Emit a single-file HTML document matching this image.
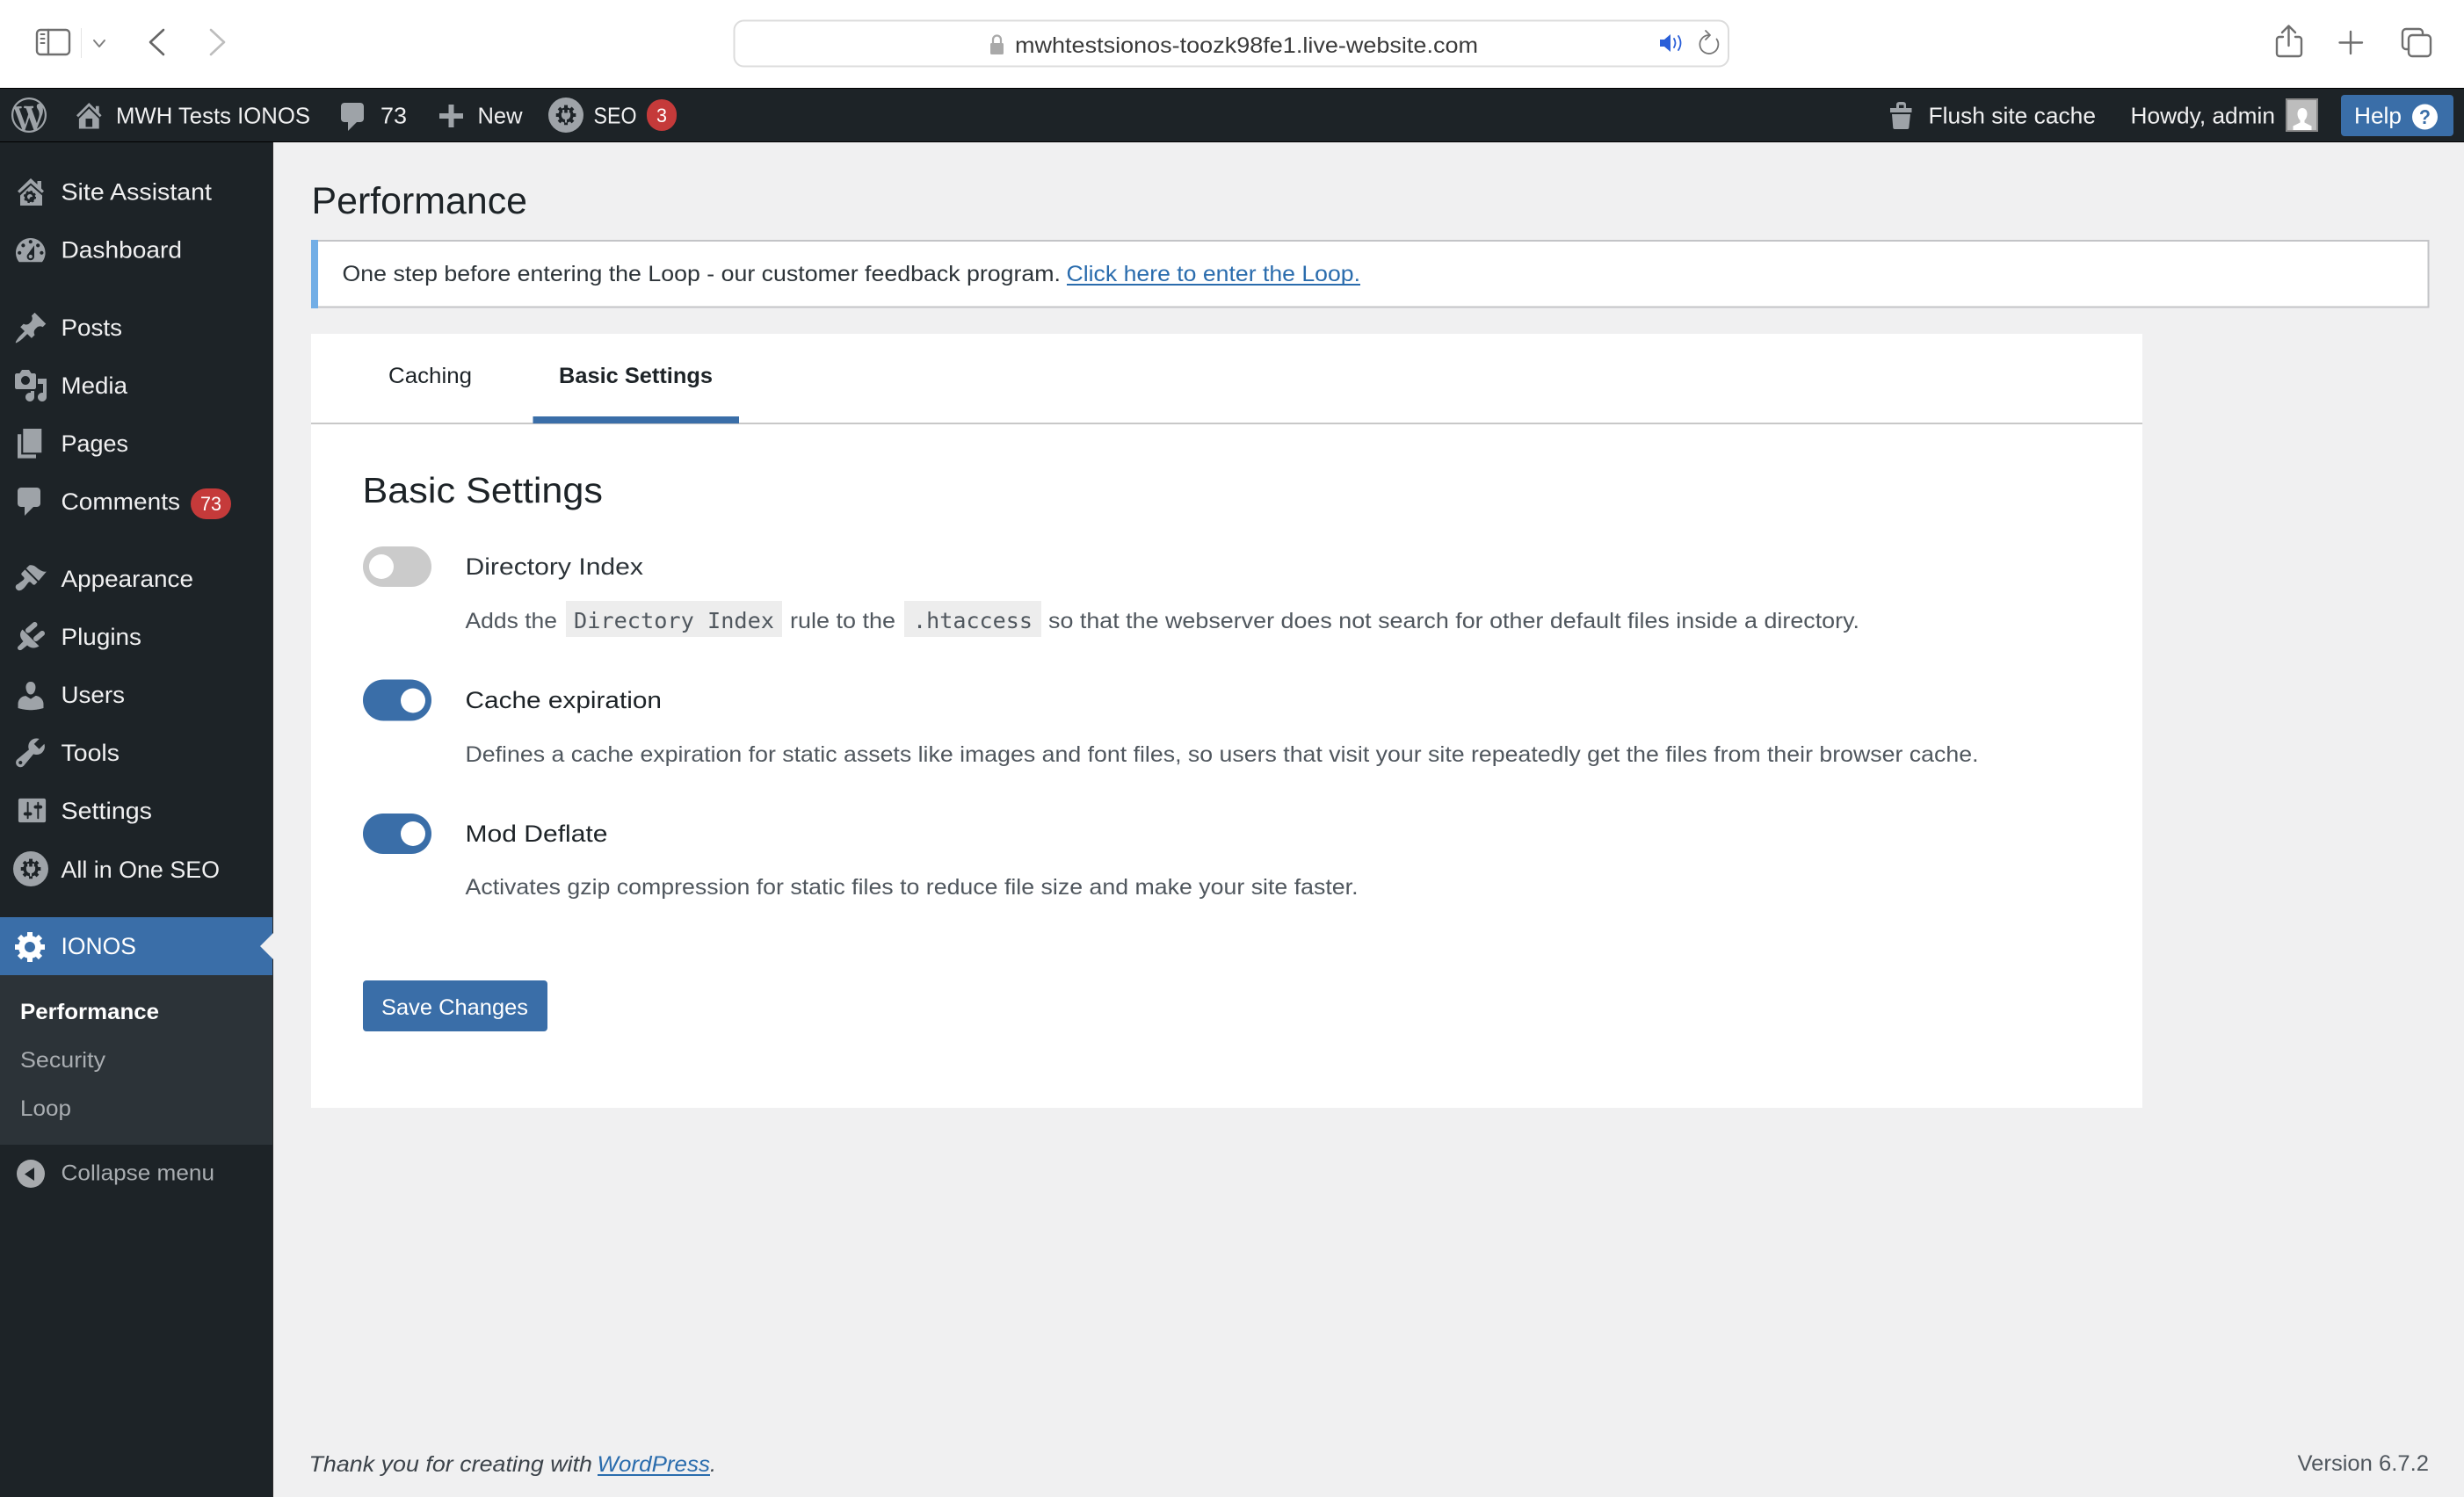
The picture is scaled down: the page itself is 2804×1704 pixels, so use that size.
<!DOCTYPE html>
<html lang="en">
<head>
<meta charset="utf-8">
<title>Performance</title>
<style>
html,body{margin:0;padding:0;width:2804px;height:1704px;overflow:hidden;background:#f0f0f1}
svg{display:block}
text{font-family:"Liberation Sans",Arial,sans-serif;white-space:pre}
.bar{font-size:26px;fill:#f0f0f1}
.menu{font-size:27px;fill:#f0f0f1}
.sub{font-size:25px;fill:#a9adb1}
.desc{font-size:25px;fill:#50575e}
.code{font-size:25px;fill:#50575e;font-family:"DejaVu Sans Mono","Liberation Mono",monospace}
.label{font-size:27px;fill:#1d2327}
.ico{fill:#9ea3a8}
.tb{fill:none;stroke:#6f6f6f;stroke-width:2.4;stroke-linecap:round;stroke-linejoin:round}
</style>
</head>
<body>
<svg xmlns="http://www.w3.org/2000/svg" width="2804" height="1704" viewBox="0 0 2804 1704">
<rect width="2804" height="1704" fill="#f0f0f1"/>

<!-- browser toolbar -->
<rect width="2804" height="100" fill="#fff"/>
<g class="tb">
<rect x="42" y="34" width="37" height="28" rx="4"/>
<path d="M55 34V62"/>
<path d="M46.5 39h4M46.5 44h4M46.5 49h4" stroke-width="2"/>
<path d="M107 46l6 7 6-7" stroke="#808080" stroke-width="2"/>
<path d="M186 34L171 48 186 62" stroke="#666" stroke-width="2.6"/>
<path d="M240 34L255 48 240 62" stroke="#bdbdbd" stroke-width="2.6"/>
</g>
<rect x="92" y="32" width="1" height="34" fill="#e4e4e4"/>

<rect x="835.5" y="23.5" width="1131.5" height="52" rx="11" fill="#fff" stroke="#dcdcdc" stroke-width="2"/>
<rect x="1127" y="49" width="15" height="13" rx="1.5" fill="#a9a9a9"/>
<path d="M1130 49v-4a4.5 4.5 0 0 1 9 0v4" fill="none" stroke="#a9a9a9" stroke-width="2.2"/>
<text x="1155" y="60" font-size="25" fill="#3a3a3a" textLength="527" lengthAdjust="spacingAndGlyphs">mwhtestsionos-toozk98fe1.live-website.com</text>
<path d="M1889 45h5l7-6v20l-7-6h-5z" fill="#2a5fd8"/>
<path d="M1905 44q3 5 0 10M1910 41q5 8 0 16" fill="none" stroke="#2a5fd8" stroke-width="1.8" stroke-linecap="round"/>
<path d="M1953.500 44.500A10.500 10.500 0 1 1 1945 40" fill="none" stroke="#777" stroke-width="1.8" stroke-linecap="round"/>
<path d="M1941 35l5 5-5 5" fill="none" stroke="#777" stroke-width="1.8" stroke-linecap="round" stroke-linejoin="round"/>

<g class="tb">
<path d="M2598 42h-4a3 3 0 0 0-3 3v16a3 3 0 0 0 3 3h22a3 3 0 0 0 3-3V45a3 3 0 0 0-3-3h-4"/>
<path d="M2604.5 52V30M2597 37l7.5-7.5L2612 37"/>
<path d="M2675 36V61M2662.5 48.500h25.500"/>
<rect x="2741" y="40" width="25" height="24" rx="4"/>
<path d="M2741 56h-3a4 4 0 0 1-4-4V37a4 4 0 0 1 4-4h15a4 4 0 0 1 4 4v3"/>
</g>

<!-- admin bar -->
<rect y="100" width="2804" height="62" fill="#1d2327"/>
<rect y="100" width="2804" height="1" fill="#000"/>
<rect y="161" width="2804" height="1" fill="#000"/>

<path class="ico" fill-rule="evenodd" transform="translate(13,111) scale(2)" d="M20 10c0-5.510-4.490-10-10-10C4.480 0 0 4.490 0 10c0 5.520 4.480 10 10 10 5.510 0 10-4.480 10-10zM7.780 15.370L4.370 6.220c.55-.02 1.170-.08 1.170-.08.5-.06.44-1.130-.06-1.110 0 0-1.450.11-2.370.11-.18 0-.37 0-.58-.01C4.120 2.690 6.870 1.110 10 1.110c2.330 0 4.450.87 6.050 2.340-.68-.11-1.650.39-1.650 1.580 0 .74.45 1.360.9 2.100.35.61.55 1.360.55 2.460 0 1.490-1.400 5-1.400 5l-3.030-8.370c.54-.02.82-.17.82-.17.5-.05.44-1.250-.06-1.220 0 0-1.440.12-2.380.12-.87 0-2.330-.12-2.330-.12-.5-.03-.56 1.200-.06 1.220l.92.08 1.260 3.410zM17.410 10c.24-.64.74-1.870.43-4.250.7 1.290 1.050 2.710 1.050 4.250 0 3.290-1.730 6.240-4.400 7.780.97-2.590 1.940-5.200 2.920-7.780zM6.100 18.090C3.120 16.650 1.110 13.530 1.110 10c0-1.300.23-2.480.72-3.590C3.250 10.300 4.670 14.200 6.100 18.090zm4.030-6.630l2.580 6.980c-.86.29-1.760.45-2.710.45-.79 0-1.570-.11-2.290-.33.81-2.380 1.620-4.740 2.420-7.100z"/>

<path class="ico" fill-rule="evenodd" transform="translate(82.3,112.25) scale(1.9)" d="M16 8.500l1.530 1.530-1.060 1.060L10 4.620l-6.470 6.470-1.060-1.060L10 2.500l4 4v-2h2v4zm-6-2.460l6 5.990V18H4v-5.970zM12 17v-5H8v5h4z"/>
<text class="bar" x="132" y="140.500" textLength="221" lengthAdjust="spacingAndGlyphs">MWH Tests IONOS</text>

<path class="ico" transform="translate(382,113) scale(2)" d="M5 2h9c1.100 0 2 .9 2 2v7c0 1.100-.9 2-2 2h-2l-5 5v-5H5c-1.100 0-2-.9-2-2V4c0-1.100.9-2 2-2z"/>
<text class="bar" x="433" y="140.500" textLength="30" lengthAdjust="spacingAndGlyphs">73</text>

<path class="ico" d="M510.5 119h6v10h10.500v6h-10.500v10h-6v-10H500v-6h10.500z"/>
<text class="bar" x="543.5" y="140.500" textLength="51" lengthAdjust="spacingAndGlyphs">New</text>

<g transform="translate(644,131)">
<circle r="20" fill="#9ea3a8"/>
<path fill="#1d2327" fill-rule="evenodd" transform="translate(-12.6,-14) scale(1.33)" d="M18 12h-2.180c-.17.7-.44 1.350-.81 1.930l1.540 1.540-2.100 2.100-1.540-1.540c-.58.36-1.230.63-1.910.79V19H8v-2.180c-.68-.16-1.330-.43-1.910-.79l-1.540 1.540-2.120-2.120 1.540-1.540c-.36-.58-.63-1.230-.79-1.910H1V9.030h2.170c.16-.7.44-1.350.8-1.940L2.430 5.550l2.100-2.100 1.540 1.540c.58-.37 1.240-.64 1.930-.81V2h3v2.180c.68.16 1.330.43 1.910.79l1.540-1.540 2.120 2.120-1.540 1.540c.36.59.64 1.240.8 1.940H18V12z"/>
<path fill="#9ea3a8" transform="scale(.85)" d="M-4.500-7h2.400v4h4.200v-4h2.400v4H6v3.500a5.500 5.500 0 0 1-4.800 5.400V10h-2.400V5.900A5.500 5.500 0 0 1-6 .500V-3h1.500z"/>
</g>
<text class="bar" x="675.5" y="140.500" textLength="49" lengthAdjust="spacingAndGlyphs">SEO</text>
<rect x="736" y="113" width="34" height="36" rx="17" fill="#c53a3a"/>
<text x="747" y="139" font-size="22" fill="#fff" textLength="12" lengthAdjust="spacingAndGlyphs">3</text>

<path class="ico" fill-rule="evenodd" d="M2151 123h7v-3.500q0-3.500 3.500-3.500h4q3.500 0 3.500 3.500V123h6.500v5h-24.500zM2161 123h5.500v-3.500h-5.500zM2153 130h21l-1.700 15.500q-.2 1.500-2 1.500h-14q-1.800 0-2-1.500z"/>
<text class="bar" x="2194.5" y="140.500" textLength="190.500" lengthAdjust="spacingAndGlyphs">Flush site cache</text>
<text class="bar" x="2424.500" y="140.500" textLength="164.500" lengthAdjust="spacingAndGlyphs">Howdy, admin</text>
<rect x="2602" y="113" width="35" height="36" fill="#bdbdbd" stroke="#8a8a8a" stroke-width="2"/>
<path fill="#fff" d="M2620 123c3.500 0 5.500 3 5.500 6.500s-1.500 6-3 7.500v2.500l8 4v4.500h-21v-4.500l8-4V137c-1.500-1.500-3-4-3-7.500s2-6.500 5.500-6.500z"/>

<rect x="2664" y="108" width="128" height="47" rx="4" fill="#3a6ea8"/>
<text class="bar" x="2679" y="140.500" textLength="54" lengthAdjust="spacingAndGlyphs" style="fill:#fff">Help</text>
<circle cx="2759.5" cy="133" r="14.500" fill="#fff"/>
<text x="2753" y="141" font-size="23" font-weight="700" fill="#3a6ea8" textLength="13" lengthAdjust="spacingAndGlyphs">?</text>

<!-- sidebar -->
<rect y="162" width="310" height="1542" fill="#1d2327"/>
<rect x="310" y="162" width="1" height="1542" fill="#2a2a2a"/>

<path class="ico" d="M35 203l7.500 7v-4h4.500v8.500l3 3-2.200 2.300L35 208.500 22.200 219.800 20 217.500z"/>
<path class="ico" fill-rule="evenodd" d="M35 211l13 11.500V234H23v-11.500zM33.500 226.500a2.500 2.500 0 1 0 0-.01z"/>
<circle cx="34" cy="224" r="4.500" fill="none" stroke="#1d2327" stroke-width="3"/>
<circle cx="34" cy="224" r="6.300" fill="none" stroke="#1d2327" stroke-width="1.600" stroke-dasharray="2.500 2.500"/>
<text class="menu" x="69.500" y="227.500" textLength="171.500" lengthAdjust="spacingAndGlyphs">Site Assistant</text>

<path class="ico" fill-rule="evenodd" transform="translate(13.8,264.7) scale(2.1)" d="M3.760 16h12.480c1.100-1.370 1.760-3.110 1.760-5 0-4.420-3.580-8-8-8s-8 3.580-8 8c0 1.890.66 3.630 1.760 5zM10 4c.55 0 1 .45 1 1s-.45 1-1 1-1-.45-1-1 .45-1 1-1zM6 6c.55 0 1 .45 1 1s-.45 1-1 1-1-.45-1-1 .45-1 1-1zm8 0c.55 0 1 .45 1 1s-.45 1-1 1-1-.45-1-1 .45-1 1-1zm-5.370 5.550L12 7v6c0 1.100-.9 2-2 2s-2-.9-2-2c0-.57.24-1.080.63-1.450zM4 10c.55 0 1 .45 1 1s-.45 1-1 1-1-.45-1-1 .45-1 1-1zm12 0c.55 0 1 .45 1 1s-.45 1-1 1-1-.45-1-1 .45-1 1-1zm-5 3c0-.55-.45-1-1-1s-1 .45-1 1 .45 1 1 1 1-.45 1-1z"/>
<text class="menu" x="69.500" y="293.500" textLength="137.500" lengthAdjust="spacingAndGlyphs">Dashboard</text>

<path class="ico" transform="translate(15,353.5) scale(2)" d="M10.440 3.020l1.820-1.820 6.360 6.350-1.830 1.820c-1.050-.68-2.480-.57-3.410.36l-.75.75c-.92.93-1.040 2.350-.35 3.410l-1.830 1.820-2.410-2.410-2.800 2.790c-.42.42-3.380 2.710-3.800 2.290s1.860-3.390 2.280-3.810l2.790-2.790L4.100 9.360l1.830-1.820c1.050.69 2.480.57 3.400-.36l.75-.75c.93-.92 1.050-2.350.36-3.410z"/>
<text class="menu" x="69.500" y="382" textLength="69.500" lengthAdjust="spacingAndGlyphs">Posts</text>

<path class="ico" fill-rule="evenodd" transform="translate(15,419) scale(2)" d="M13 11V4c0-.55-.45-1-1-1h-1.670L9 1H5L3.670 3H2c-.55 0-1 .45-1 1v7c0 .55.45 1 1 1h10c.55 0 1-.45 1-1zM7 4.500c1.380 0 2.500 1.120 2.500 2.500S8.380 9.500 7 9.500 4.500 8.380 4.500 7 5.620 4.500 7 4.500zM14 6h5v10.500c0 1.380-1.120 2.500-2.500 2.500S14 17.880 14 16.500s1.120-2.500 2.500-2.500c.17 0 .34.02.5.05V9h-3V6zm-4 8.050V13h2v3.500c0 1.380-1.120 2.500-2.500 2.500S7 17.880 7 16.500 8.120 14 9.500 14c.17 0 .34.02.5.05z"/>
<text class="menu" x="69.500" y="448" textLength="75.500" lengthAdjust="spacingAndGlyphs">Media</text>

<path class="ico" transform="translate(13.7,483.8) scale(2.1)" d="M6 15V2h10v13H6zm-1 1h8v2H3V5h2v11z"/>
<text class="menu" x="69.500" y="514" textLength="76.500" lengthAdjust="spacingAndGlyphs">Pages</text>

<path class="ico" transform="translate(14,551) scale(2)" d="M5 2h9c1.100 0 2 .9 2 2v7c0 1.100-.9 2-2 2h-2l-5 5v-5H5c-1.100 0-2-.9-2-2V4c0-1.100.9-2 2-2z"/>
<text class="menu" x="69.500" y="580" textLength="135.500" lengthAdjust="spacingAndGlyphs">Comments</text>
<rect x="217" y="556" width="46" height="35" rx="17.500" fill="#c53a3a"/>
<text x="228" y="581" font-size="22" fill="#fff" textLength="24" lengthAdjust="spacingAndGlyphs">73</text>

<path class="ico" transform="translate(15,639) scale(2)" d="M14.480 11.060L7.410 3.990l1.500-1.500c.5-.56 2.300-.47 3.510.32 1.210.8 1.430 1.280 2.910 2.100 1.180.64 2.450 1.260 3.670.85zm-.71.71L6.700 4.700 4.930 6.470c-.39.39-.39 1.020 0 1.410l1.060 1.060c.39.39.39 1.030 0 1.420-.6.6-1.430 1.110-2.210 1.690-.35.26-.7.53-1.010.84C1.430 13.230.78 14.810 2.010 16s2.750.6 4.130-.79c.31-.31.58-.66.84-1.010.58-.78 1.090-1.610 1.690-2.210.39-.39 1.020-.39 1.410 0l1.060 1.060c.39.39 1.020.39 1.410 0z"/>
<text class="menu" x="69.500" y="668" textLength="150.500" lengthAdjust="spacingAndGlyphs">Appearance</text>

<path class="ico" d="M25.500 716.500L44.500 735.500Q37 740 31 734.500L24.800 739.500Q22 741 20.500 739Q19 737 21.500 735L26.500 730Q20 723 25.500 716.500Z"/>
<path d="M32 717.500L39.500 711M41 727L48 721" fill="none" stroke="#9ea3a8" stroke-width="6" stroke-linecap="round"/>
<text class="menu" x="69.500" y="734" textLength="91.500" lengthAdjust="spacingAndGlyphs">Plugins</text>

<path class="ico" transform="translate(15,772) scale(2)" d="M10 9.250c-2.270 0-2.730-3.440-2.730-3.440C7 4.020 7.820 2 9.970 2c2.160 0 2.980 2.020 2.710 3.810 0 0-.41 3.440-2.680 3.440zm0 2.570L12.720 10c2.390 0 4.520 2.330 4.520 4.530v2.490s-3.650 1.130-7.240 1.130c-3.650 0-7.240-1.130-7.240-1.130v-2.490c0-2.250 1.940-4.480 4.470-4.480z"/>
<text class="menu" x="69.500" y="800" textLength="72.500" lengthAdjust="spacingAndGlyphs">Users</text>

<path class="ico" fill-rule="evenodd" transform="translate(14,836.3) scale(2.05)" d="M16.680 9.770c-1.340 1.340-3.300 1.670-4.950.99l-5.410 6.520c-.99.99-2.590.99-3.580 0s-.99-2.590 0-3.570l6.520-5.420c-.68-1.650-.35-3.610.99-4.950 1.280-1.280 3.120-1.620 4.720-1.060l-2.890 2.890 2.820 2.820 2.860-2.870c.53 1.580.18 3.390-1.080 4.650zM3.810 16.210c.4.39 1.040.39 1.430 0 .4-.4.4-1.040 0-1.430-.39-.4-1.030-.4-1.430 0-.39.39-.39 1.030 0 1.430z"/>
<text class="menu" x="69.500" y="866" textLength="66.500" lengthAdjust="spacingAndGlyphs">Tools</text>

<path class="ico" fill-rule="evenodd" transform="translate(17,903) scale(1.95)" d="M18 16V4c0-.55-.45-1-1-1H3c-.55 0-1 .45-1 1v12c0 .55.45 1 1 1h14c.55 0 1-.45 1-1zM8 11h1c.55 0 1 .45 1 1s-.45 1-1 1H8v1.500c0 .28-.22.5-.5.5s-.5-.22-.5-.5V13H6c-.55 0-1-.45-1-1s.45-1 1-1h1V5.500c0-.28.22-.5.5-.5s.5.22.5.5V11zm5-2h-1c-.55 0-1-.45-1-1s.45-1 1-1h1V5.500c0-.28.22-.5.5-.5s.5.22.5.5V7h1c.55 0 1 .45 1 1s-.45 1-1 1h-1v5.500c0 .28-.22.5-.5.5s-.5-.22-.5-.5V9z"/>
<text class="menu" x="69.500" y="932" textLength="103.500" lengthAdjust="spacingAndGlyphs">Settings</text>

<g transform="translate(35,989)">
<circle r="20" fill="#9ea3a8"/>
<path fill="#1d2327" fill-rule="evenodd" transform="translate(-12.6,-14) scale(1.33)" d="M18 12h-2.180c-.17.7-.44 1.350-.81 1.930l1.540 1.540-2.100 2.100-1.540-1.540c-.58.36-1.230.63-1.910.79V19H8v-2.180c-.68-.16-1.330-.43-1.910-.79l-1.540 1.540-2.120-2.120 1.540-1.540c-.36-.58-.63-1.230-.79-1.910H1V9.030h2.170c.16-.7.44-1.350.8-1.940L2.430 5.550l2.100-2.100 1.540 1.540c.58-.37 1.240-.64 1.930-.81V2h3v2.180c.68.16 1.330.43 1.910.79l1.540-1.540 2.120 2.120-1.540 1.540c.36.59.64 1.240.8 1.940H18V12z"/>
<path fill="#9ea3a8" transform="scale(.85)" d="M-4.500-7h2.400v4h4.200v-4h2.400v4H6v3.500a5.500 5.500 0 0 1-4.800 5.400V10h-2.400V5.900A5.500 5.500 0 0 1-6 .500V-3h1.500z"/>
</g>
<text class="menu" x="69.500" y="999" textLength="180.500" lengthAdjust="spacingAndGlyphs">All in One SEO</text>

<rect y="1044" width="310" height="66" fill="#3a6ea8"/>
<path fill="#fff" fill-rule="evenodd" transform="translate(15,1057) scale(2)" d="M18 12h-2.180c-.17.7-.44 1.350-.81 1.930l1.540 1.540-2.100 2.100-1.540-1.540c-.58.36-1.230.63-1.910.79V19H8v-2.180c-.68-.16-1.330-.43-1.910-.79l-1.540 1.540-2.120-2.120 1.540-1.540c-.36-.58-.63-1.230-.79-1.910H1V9.030h2.170c.16-.7.44-1.350.8-1.940L2.430 5.550l2.100-2.100 1.540 1.540c.58-.37 1.240-.64 1.930-.81V2h3v2.180c.68.16 1.330.43 1.910.79l1.540-1.540 2.120 2.120-1.540 1.540c.36.59.64 1.240.8 1.940H18V12zm-8.500 1.500c1.660 0 3-1.340 3-3s-1.340-3-3-3-3 1.340-3 3 1.340 3 3 3z"/>
<text class="menu" x="69.500" y="1086" textLength="85.500" lengthAdjust="spacingAndGlyphs" style="fill:#fff">IONOS</text>
<polygon points="312,1061 296,1077 312,1093" fill="#f0f0f1"/>

<rect y="1110" width="310" height="193" fill="#2c3338"/>
<text x="23" y="1160" font-size="25" font-weight="700" fill="#fff" textLength="158" lengthAdjust="spacingAndGlyphs">Performance</text>
<text class="sub" x="23" y="1215" textLength="97" lengthAdjust="spacingAndGlyphs">Security</text>
<text class="sub" x="23" y="1270" textLength="58" lengthAdjust="spacingAndGlyphs">Loop</text>

<circle cx="35" cy="1336" r="16" fill="#a7aaad"/>
<polygon points="39,1329 39,1344 28,1336.5" fill="#1d2327"/>
<text class="sub" x="69.500" y="1343.500" textLength="174.500" lengthAdjust="spacingAndGlyphs">Collapse menu</text>

<!-- content -->
<text x="354.500" y="243" font-size="43" fill="#1d2327" textLength="245.500" lengthAdjust="spacingAndGlyphs">Performance</text>

<rect x="355" y="274" width="2408.5" height="75.5" fill="#fff" stroke="#c3c4c7" stroke-width="2"/>
<rect x="354" y="273" width="8" height="78" fill="#72aee6"/>
<text x="389.5" y="320" font-size="25" fill="#2c3338" textLength="817.500" lengthAdjust="spacingAndGlyphs">One step before entering the Loop - our customer feedback program.</text>
<text x="1213.5" y="320" font-size="25" fill="#2a6cad" textLength="334.500" lengthAdjust="spacingAndGlyphs">Click here to enter the Loop.</text>
<rect x="1214" y="323" width="334" height="2" fill="#2a6cad"/>

<rect x="354" y="380" width="2084" height="881" fill="#fff"/>
<text x="442" y="436" font-size="25" fill="#1d2327" textLength="95" lengthAdjust="spacingAndGlyphs">Caching</text>
<text x="636" y="436" font-size="25" font-weight="700" fill="#1d2327" textLength="175" lengthAdjust="spacingAndGlyphs">Basic Settings</text>
<rect x="354" y="481" width="2084" height="2" fill="#c8c8c8"/>
<rect x="606.5" y="474" width="234.500" height="8" fill="#3a6ea8"/>

<text x="412.5" y="572" font-size="41" fill="#1d2327" textLength="273.500" lengthAdjust="spacingAndGlyphs">Basic Settings</text>

<rect x="413" y="622" width="78" height="46" rx="23" fill="#cbcbcb"/>
<circle cx="434" cy="645" r="14" fill="#fff"/>
<text class="label" x="529.5" y="654" textLength="202.500" lengthAdjust="spacingAndGlyphs" style="fill:#2c3338">Directory Index</text>

<text class="desc" x="529.5" y="715" textLength="104.500" lengthAdjust="spacingAndGlyphs">Adds the</text>
<rect x="644" y="684" width="246" height="41" fill="#ededed"/>
<text class="code" x="653" y="715" textLength="228" lengthAdjust="spacingAndGlyphs">Directory Index</text>
<text class="desc" x="899" y="715" textLength="120" lengthAdjust="spacingAndGlyphs">rule to the</text>
<rect x="1029" y="684" width="156" height="41" fill="#ededed"/>
<text class="code" x="1039" y="715" textLength="136" lengthAdjust="spacingAndGlyphs">.htaccess</text>
<text class="desc" x="1193" y="715" textLength="923" lengthAdjust="spacingAndGlyphs">so that the webserver does not search for other default files inside a directory.</text>

<rect x="413" y="773.500" width="78" height="47" rx="23.500" fill="#3a6ea8"/>
<circle cx="470" cy="797.500" r="14" fill="#fff"/>
<text class="label" x="529.5" y="806" textLength="223.500" lengthAdjust="spacingAndGlyphs">Cache expiration</text>
<text class="desc" x="529.5" y="867" textLength="1722" lengthAdjust="spacingAndGlyphs">Defines a cache expiration for static assets like images and font files, so users that visit your site repeatedly get the files from their browser cache.</text>

<rect x="413" y="926" width="78" height="46" rx="23" fill="#3a6ea8"/>
<circle cx="470" cy="949" r="14" fill="#fff"/>
<text class="label" x="529.5" y="958" textLength="162" lengthAdjust="spacingAndGlyphs">Mod Deflate</text>
<text class="desc" x="529.5" y="1018" textLength="1016" lengthAdjust="spacingAndGlyphs">Activates gzip compression for static files to reduce file size and make your site faster.</text>

<rect x="413" y="1116" width="210" height="58" rx="4" fill="#3a6ea8"/>
<text x="434" y="1155" font-size="25" fill="#fff" textLength="167" lengthAdjust="spacingAndGlyphs">Save Changes</text>

<text x="351.5" y="1675" font-size="25" font-style="italic" fill="#3c434a" textLength="322.500" lengthAdjust="spacingAndGlyphs">Thank you for creating with</text>
<text x="679.5" y="1675" font-size="25" font-style="italic" fill="#2a6cad" textLength="128.500" lengthAdjust="spacingAndGlyphs">WordPress</text>
<rect x="680" y="1678" width="128" height="2" fill="#2a6cad"/>
<text x="808" y="1675" font-size="25" font-style="italic" fill="#3c434a">.</text>
<text x="2614.5" y="1674" font-size="25" fill="#50575e" textLength="149.500" lengthAdjust="spacingAndGlyphs">Version 6.7.2</text>
</svg>
</body>
</html>
